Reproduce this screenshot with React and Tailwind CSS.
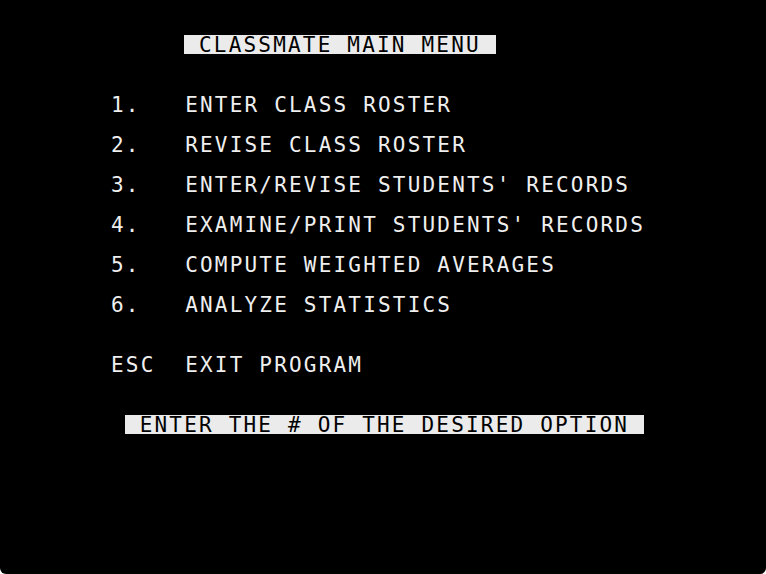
export default function App() {
  // 40-column text screen, one entry per text row (blank strings are empty rows)
  const lines = [
    {pad: "     ", inverse: " CLASSMATE MAIN MENU "},
    "",
    "",
    "1.   ENTER CLASS ROSTER",
    "",
    "2.   REVISE CLASS ROSTER",
    "",
    "3.   ENTER/REVISE STUDENTS' RECORDS",
    "",
    "4.   EXAMINE/PRINT STUDENTS' RECORDS",
    "",
    "5.   COMPUTE WEIGHTED AVERAGES",
    "",
    "6.   ANALYZE STATISTICS",
    "",
    "",
    "ESC  EXIT PROGRAM",
    "",
    "",
    {pad: " ", inverse: " ENTER THE # OF THE DESIRED OPTION "},
  ];

  return (
    <div className="w-[766px] h-[574px] bg-white">
      <div className="w-full h-full bg-black rounded-b-[6px] pt-[35px] pl-[111px] flex flex-col font-['DejaVu_Sans_Mono',monospace] text-[21px] leading-[20px] tracking-[2.19px] text-[#efefef] whitespace-pre">
        {lines.map((line, i) =>
          typeof line === "string" ? (
            <div key={i} className="h-[20px]">
              {line}
            </div>
          ) : (
            <div key={i} className="h-[20px] flex items-start -ml-px">
              <span>{line.pad}</span>
              <span className="inline-block h-[19px] bg-[#ebebeb] text-black">{line.inverse}</span>
            </div>
          )
        )}
      </div>
    </div>
  );
}
